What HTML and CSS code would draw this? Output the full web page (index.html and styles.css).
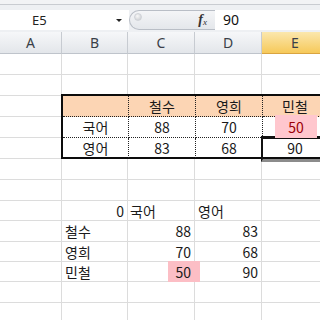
FILE: index.html
```html
<!DOCTYPE html>
<html lang="ko">
<head>
<meta charset="utf-8">
<link rel="stylesheet" href="styles.css">
</head>
<body>
<div class="app">
  <div class="ribbon"></div>
  <div class="fbar">
    <div class="namebox"><span class="ref">E5</span><span class="arrow"></span></div>
    <div class="grip"><span class="dot"></span><span class="fx"><i>f</i><sub>x</sub></span></div>
    <div class="formula">90</div>
  </div>
  <div class="sheet">
    <div class="ch">A</div><div class="ch">B</div><div class="ch">C</div><div class="ch">D</div><div class="ch sel">E</div>

    <div class="c"></div><div class="c"></div><div class="c"></div><div class="c"></div><div class="c"></div>
    <div class="c"></div><div class="c"></div><div class="c"></div><div class="c"></div><div class="c"></div>

    <div class="c"></div>
    <div class="tbl">
      <div class="t hd"></div><div class="t hd">철수</div><div class="t hd">영희</div><div class="t hd last">민철</div>
      <div class="t">국어</div><div class="t">88</div><div class="t">70</div><div class="t last"><span class="bad">50</span></div>
      <div class="t bot">영어</div><div class="t bot">83</div><div class="t bot">68</div><div class="t bot last active">90</div>
    </div>
    <div class="c"></div>
    <div class="c"></div>

    <div class="c"></div><div class="c"></div><div class="c"></div><div class="c"></div><div class="c"></div>
    <div class="c"></div><div class="c"></div><div class="c"></div><div class="c"></div><div class="c"></div>

    <div class="c"></div><div class="c r pr2">0</div><div class="c l pl2">국어</div><div class="c l pl3">영어</div><div class="c"></div>
    <div class="c"></div><div class="c l pl3">철수</div><div class="c r pr2">88</div><div class="c r pr3">83</div><div class="c"></div>
    <div class="c"></div><div class="c l pl3">영희</div><div class="c r pr2">70</div><div class="c r pr3">68</div><div class="c"></div>
    <div class="c"></div><div class="c l pl3">민철</div><div class="c r pr2 hl">50</div><div class="c r pr3">90</div><div class="c"></div>

    <div class="c"></div><div class="c"></div><div class="c"></div><div class="c"></div><div class="c"></div>
    <div class="c"></div><div class="c"></div><div class="c"></div><div class="c"></div><div class="c"></div>
  </div>
</div>
</body>
</html>
```

FILE: styles.css
```css
html, body {
  margin: 0;
  padding: 0;
  background: #fff;
}
.app {
  width: 320px;
  height: 320px;
  overflow: hidden;
  font-family: "Noto Sans CJK KR", "Noto Sans", sans-serif;
  color: #1a1a1a;
}
.ribbon {
  height: 4px;
  background: #f2f3f5;
  border-bottom: 1px solid #c9ccd1;
}
.fbar {
  height: 27px;
  box-sizing: border-box;
  padding-top: 5px;
  background: #eef0f3;
  display: flex;
  align-items: flex-start;
}
.namebox {
  width: 129px;
  height: 20px;
  background: #fff;
  display: flex;
  align-items: center;
  position: relative;
  font-family: "Noto Sans", sans-serif;
  font-size: 13px;
}
.namebox .ref {
  padding-left: 32px;
  flex: 1;
  color: #222;
}
.arrow {
  width: 0;
  height: 0;
  border-left: 3px solid transparent;
  border-right: 3px solid transparent;
  border-top: 3px solid #222;
  margin-right: 7px;
  margin-top: 1px;
}
.grip {
  width: 86px;
  height: 20px;
  box-sizing: border-box;
  background: linear-gradient(#f4f5f7, #e4e7eb);
  border: 1px solid #b9bec6;
  border-right: none;
  border-radius: 11px 0 0 11px;
  display: flex;
  align-items: flex-start;
}
.dot {
  width: 8px;
  height: 8px;
  border-radius: 50%;
  margin: 2px 0 0 4px;
  background: radial-gradient(circle at 40% 35%, #f8f8f8, #c4c7cc);
  border: 1px solid #d0d3d8;
  box-sizing: border-box;
}
.fx {
  margin-left: auto;
  margin-right: 8px;
  font-family: "Liberation Serif", serif;
  font-size: 14px;
  color: #333;
  line-height: 18px;
}
.fx i {
  font-weight: bold;
}
.fx sub {
  font-size: 9px;
  font-style: italic;
  vertical-align: -1px;
}
.formula {
  flex: 1;
  height: 20px;
  background: #fff;
  font-family: "Noto Sans", sans-serif;
  font-size: 14px;
  line-height: 20px;
  padding-left: 8px;
  color: #111;
}
.sheet {
  display: grid;
  grid-template-columns: 62px 66px 67px 67px 67px;
  grid-template-rows: 22px 21px 21px 21px 21px 21px 21px 21px 20px 21px 20px 20px 21px 21px;
  width: 329px;
}
.ch {
  box-sizing: border-box;
  background: linear-gradient(#f6f7f9, #e3e6ea);
  border-right: 1px solid #c7cbd1;
  border-bottom: 1px solid #bfc4cb;
  font-family: "Noto Sans", sans-serif;
  font-size: 14px;
  color: #3a3f48;
  display: flex;
  align-items: center;
  justify-content: center;
}
.ch.sel {
  background: linear-gradient(#fbe7ad, #f6c95a);
  border-bottom-color: #d9a441;
}
.c {
  box-sizing: border-box;
  border-right: 1px solid #dcdcdc;
  border-bottom: 1px solid #dcdcdc;
  font-size: 14px;
  display: flex;
  align-items: center;
  white-space: nowrap;
}
.c.r { justify-content: flex-end; }
.c.l { justify-content: flex-start; }
.pr2 { padding-right: 3px; }
.pr3 { padding-right: 3px; }
.pl2 { padding-left: 2px; }
.pl3 { padding-left: 3px; }
.c.hl {
  position: relative;
  z-index: 0;
}
.c.hl::before {
  content: "";
  position: absolute;
  left: 40px;
  width: 32px;
  top: -1px;
  bottom: -1px;
  background: #fcbec5;
  z-index: -1;
}
.tbl {
  grid-column: 2 / span 4;
  grid-row: 4 / span 3;
  margin: -2px 0 0 -1px;
  border: 2px solid #0c0c0c;
  background: #fff;
  display: grid;
  grid-template-columns: 66px 67px 67px 1fr;
  grid-template-rows: 21px 21px 1fr;
  position: relative;
  z-index: 1;
}
.t {
  box-sizing: border-box;
  border-right: 1px dotted #222;
  border-bottom: 1px dotted #222;
  font-size: 14px;
  display: flex;
  align-items: center;
  justify-content: center;
  position: relative;
}
.t.last { border-right: none; }
.t.bot { border-bottom: none; }
.t.hd { background: #fcd5b4; }
.bad {
  align-self: stretch;
  width: 42px;
  margin: -2px 0 -1px 12px;
  background: #ffc7ce;
  color: #9c0006;
  display: flex;
  align-items: center;
  justify-content: center;
  position: relative;
  z-index: 1;
}
.t:has(.bad) { justify-content: flex-start; }
.active::after {
  content: "";
  position: absolute;
  left: -2px;
  top: -2px;
  right: -12px;
  bottom: -4px;
  border-top: 3px solid #111;
  border-left: 2px solid #111;
  border-bottom: 3px solid #8c8c8c;
}
```
